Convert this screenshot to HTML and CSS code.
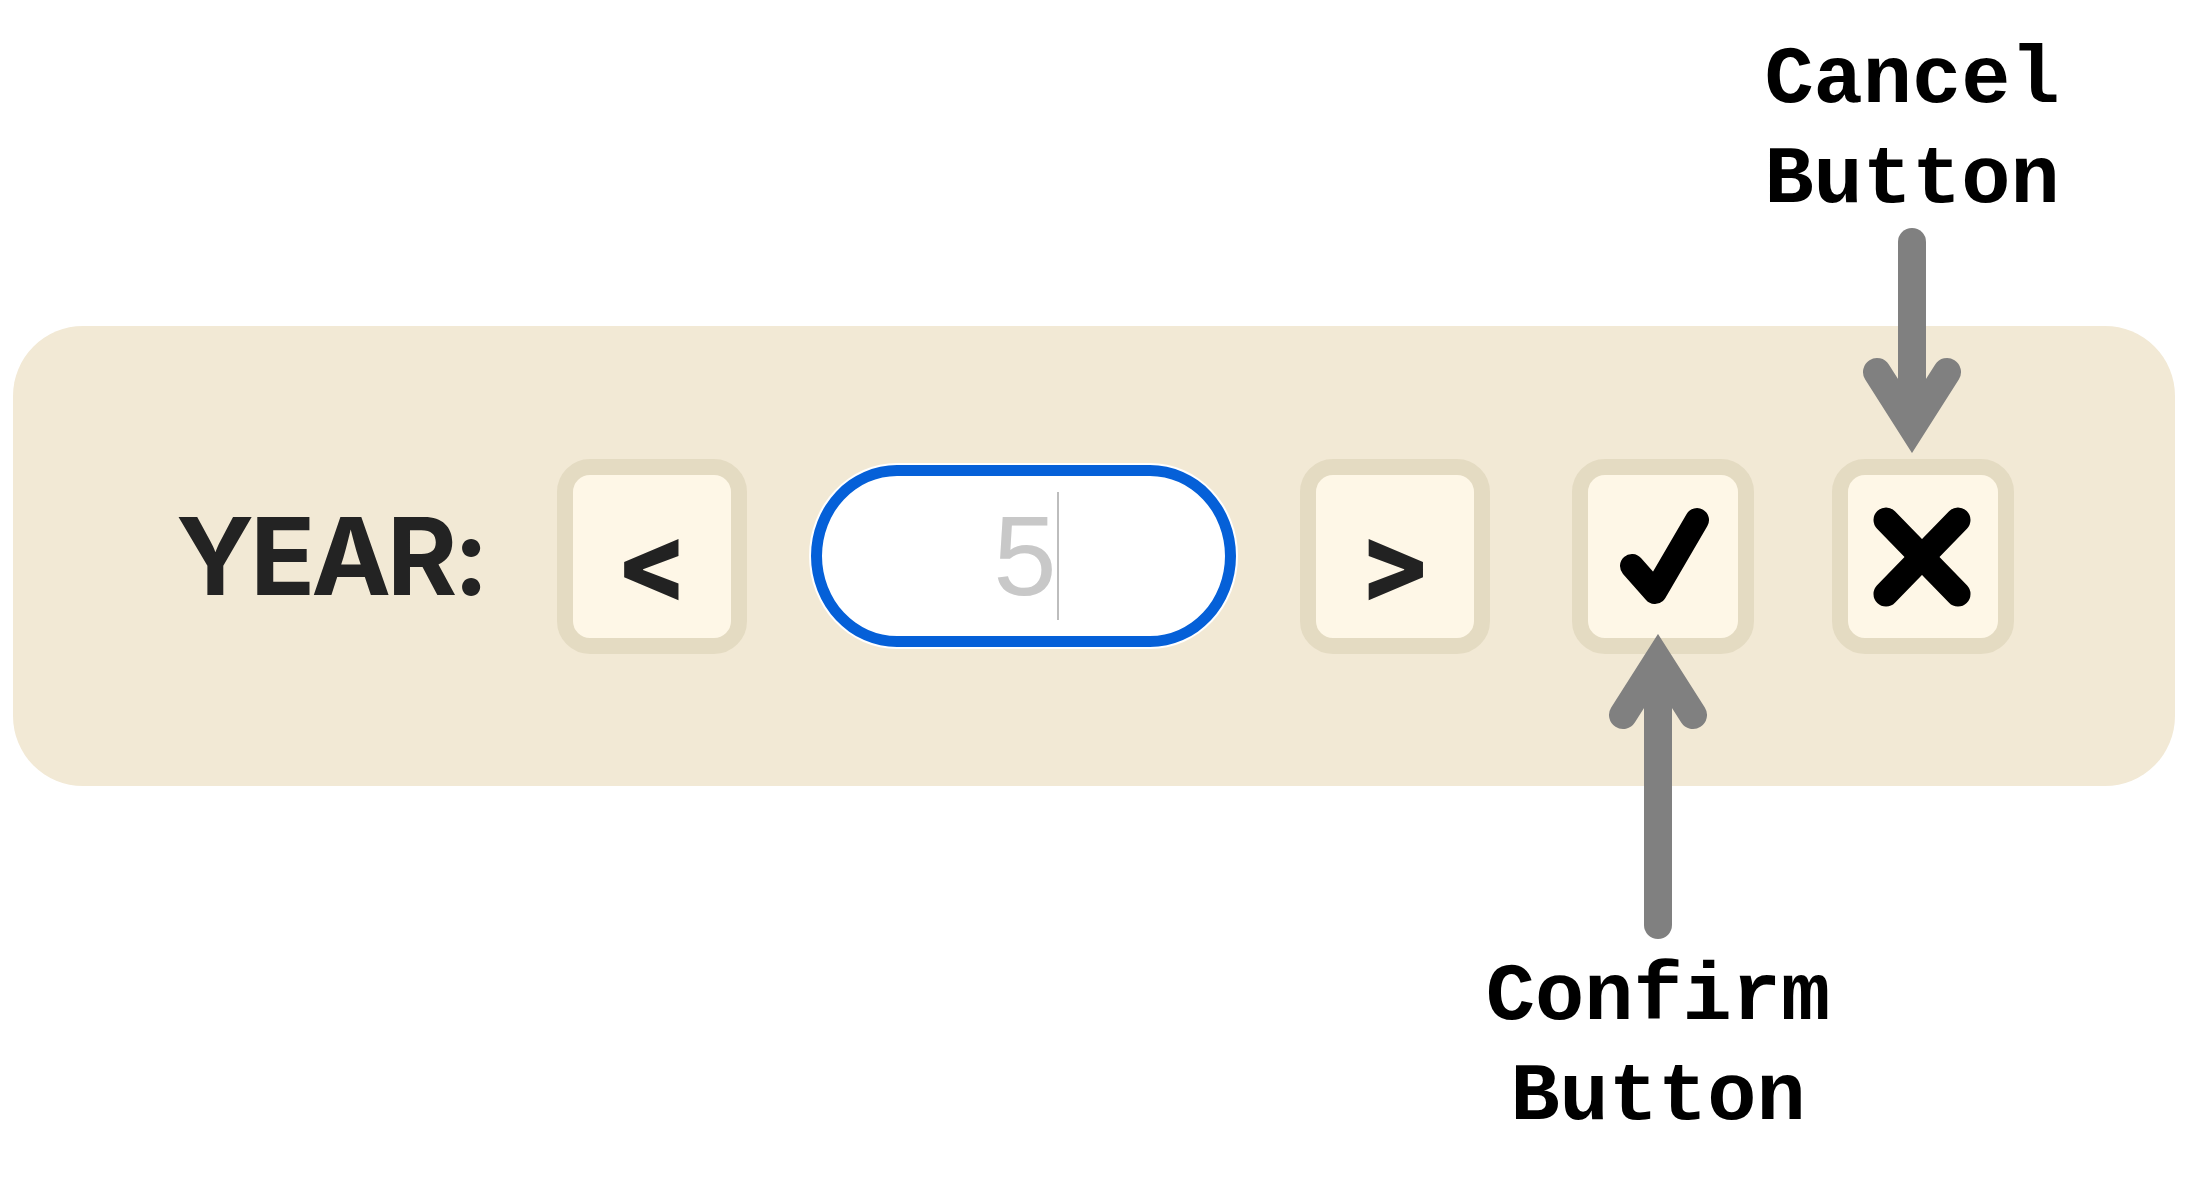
FILE: index.html
```html
<!DOCTYPE html>
<html lang="en">
<head>
    <meta charset="UTF-8">
    <title>Year picker</title>
    <meta name="viewport" content="width=device-width, initial-scale=1">
    <link rel="stylesheet" href="styles.css">
</head>
<body>
    <div class="year-bar">
        <span class="year-label">YEAR:</span>
        <button class="step-btn" type="button">&lt;</button>
        <div class="year-input" role="textbox">
            <span class="year-value">5</span><span class="caret"></span>
        </div>
        <button class="step-btn step-next" type="button">&gt;</button>

        <!-- confirm: arrow + label hang below the button -->
        <div class="annotated confirm-wrap">
            <button class="action-btn" type="button" aria-label="Confirm">
                <svg class="icon" width="100" height="110" viewBox="0 0 100 110">
                    <polyline points="19,65 42,91 84,19" fill="none" stroke="#000" stroke-width="24" stroke-linecap="round" stroke-linejoin="round"/>
                </svg>
            </button>
            <div class="callout callout-below">
                <svg class="arrow" width="120" height="307" viewBox="0 0 120 307">
                    <line x1="60" y1="291" x2="60" y2="40" stroke="#808080" stroke-width="28" stroke-linecap="round"/>
                    <polyline points="25,81 60,26 95,81" fill="none" stroke="#808080" stroke-width="28" stroke-linecap="round" stroke-linejoin="miter"/>
                </svg>
                <div class="callout-text">Confirm<br>Button</div>
            </div>
        </div>

        <!-- cancel: label + arrow sit above the button -->
        <div class="annotated cancel-wrap">
            <button class="action-btn" type="button" aria-label="Cancel">
                <svg class="icon" width="100" height="110" viewBox="0 0 100 110">
                    <line x1="13" y1="19" x2="85" y2="93" stroke="#000" stroke-width="25" stroke-linecap="round"/>
                    <line x1="85" y1="19" x2="13" y2="93" stroke="#000" stroke-width="25" stroke-linecap="round"/>
                </svg>
            </button>
            <div class="callout callout-above">
                <div class="callout-text">Cancel<br>Button</div>
                <svg class="arrow" width="120" height="229" viewBox="0 0 120 229">
                    <line x1="60" y1="18" x2="60" y2="190" stroke="#808080" stroke-width="28" stroke-linecap="round"/>
                    <polyline points="25,148 60,203 95,148" fill="none" stroke="#808080" stroke-width="28" stroke-linecap="round" stroke-linejoin="miter"/>
                </svg>
            </div>
        </div>
    </div>
</body>
</html>
```

FILE: styles.css
```css
html {
    min-height: 100%;
}
body {
    margin: 0;
    min-height: 100vh;
    padding-top: 326px;
    box-sizing: border-box;
    background: #fff;
    font-family: Inter, Roboto, 'Liberation Sans', Arial, sans-serif;
    color: #232323;
}
.year-bar {
    width: 2162px;
    height: 460px;
    margin-left: 13px;
    box-sizing: border-box;
    padding-left: 163px;
    background: #f2e9d5;
    border-radius: 70px;
    display: flex;
    align-items: center;
    gap: 64px;
}
.year-label {
    width: 317px;
    font-size: 107px;
    font-weight: 700;
    line-height: 1;
    letter-spacing: -4px;
    color: #232323;
}
.step-btn,
.action-btn {
    width: 190px;
    height: 195px;
    box-sizing: border-box;
    border: 16px solid #e4dbc2;
    border-radius: 33px;
    background: #fef7e7;
    display: flex;
    align-items: center;
    justify-content: center;
    padding: 0;
    cursor: pointer;
}
.step-btn {
    font-family: Inter, Roboto, 'Liberation Sans', Arial, sans-serif;
    font-size: 106px;
    font-weight: 800;
    line-height: 1;
    color: #222;
    padding-top: 14px;
}
.action-btn {
    width: 182px;
}
.year-input {
    width: 425px;
    height: 182px;
    box-sizing: border-box;
    border: 11px solid #0560d8;
    border-radius: 86px / 91px;
    background: #fff;
    box-shadow: 0 0 0 2px #fff;
    display: flex;
    align-items: center;
    justify-content: center;
    padding-left: 5px;
}
.year-value {
    font-family: 'Liberation Sans', Arial, sans-serif;
    font-size: 114px;
    line-height: 1;
    color: #c8c8c8;
}
.caret {
    width: 2px;
    height: 128px;
    background: #bdbdbd;
}
.icon {
    display: block;
}
.annotated {
    position: relative;
}
.confirm-wrap {
    margin-left: 18px;
}
.cancel-wrap {
    margin-left: 14px;
}
.callout {
    position: absolute;
    width: 340px;
    display: flex;
    flex-direction: column;
    align-items: center;
    z-index: 2;
}
.callout-above {
    bottom: calc(100% + 6px);
    left: -90px;
}
.callout-below {
    top: calc(100% - 20px);
    left: -84px;
}
.arrow {
    display: block;
}
.callout-text {
    font-family: 'Courier New', 'Nimbus Mono PS', 'Nimbus Mono L', FreeMono, 'Liberation Mono', monospace;
    font-weight: 700;
    font-size: 82px;
    line-height: 100px;
    color: #000;
    text-align: center;
    white-space: nowrap;
    transform: translateY(7px);
}
```
